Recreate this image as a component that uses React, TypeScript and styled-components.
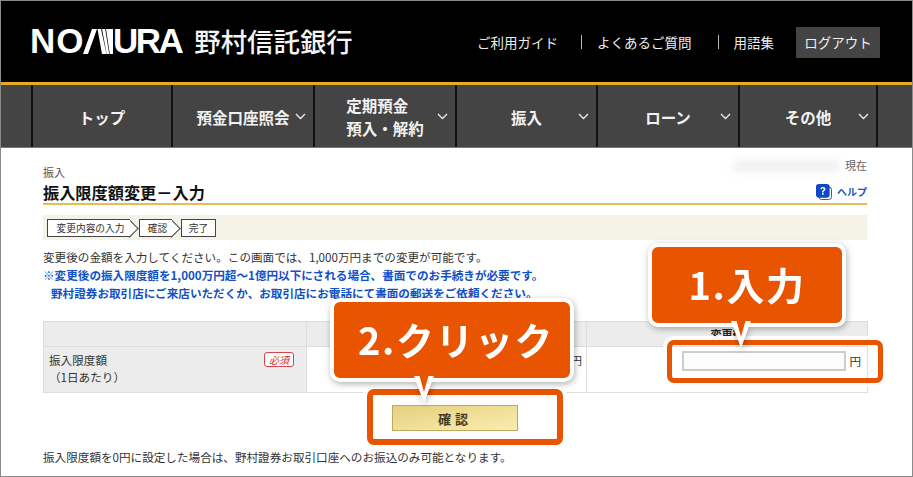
import React from 'react'
import styled, { createGlobalStyle } from 'styled-components'

const GlobalStyle = createGlobalStyle`
  html, body {
    margin: 0;
    padding: 0;
    background: #fff;
  }
  body {
    font-family: "Noto Sans CJK JP", "Liberation Sans", sans-serif;
    color: #333;
  }
`

const navItems = [
  { label: ['トップ'], arrow: false },
  { label: ['預金口座照会'], arrow: true },
  { label: ['定期預金', '預入・解約'], arrow: true },
  { label: ['振入'], arrow: true },
  { label: ['ローン'], arrow: true },
  { label: ['その他'], arrow: true },
]

const Chevron = () => (
  <ChevronSvg viewBox="0 0 11 7">
    <path d="M1 1l4.5 4.5L10 1" fill="none" stroke="#eee" strokeWidth="1.3" />
  </ChevronSvg>
)

const MonogramM = () => (
  <LogoMark viewBox="0 0 30 25">
    <path
      fill="#fff"
      d="M0 25L9 0h5L5 25zM14.500 0h3.500l5.500 25h-4.500zM19 0h3.200l4 25h-2.500zM23 0h7v25h-3.200z"
    />
  </LogoMark>
)

const HelpIcon = () => (
  <HelpSvg viewBox="0 0 17 17">
    <rect x="3" y="3" width="13.500" height="13.500" rx="3" fill="#fff" stroke="#1a4fc0" />
    <rect x="0" y="0" width="14.500" height="14.500" rx="3" fill="#1248c2" />
    <path
      d="M4.600 5.400c.2-1.500 1.200-2.300 2.700-2.300 1.600 0 2.700.9 2.700 2.300 0 1.100-.6 1.600-1.300 2.100-.6.4-.8.7-.8 1.400H6.400c0-1.200.4-1.800 1.100-2.300.5-.4.8-.6.8-1.100 0-.5-.4-.9-1-.9-.6 0-1 .3-1.100 1z"
      fill="#fff"
    />
    <rect x="6.400" y="9.700" width="1.700" height="1.700" fill="#fff" />
  </HelpSvg>
)

const App = (): JSX.Element => (
  <Frame>
    <GlobalStyle />
    <Header>
      <Logo>
        <LogoWord>
          <LogoLetters $spacing={1}>NO</LogoLetters>
          <MonogramM />
          <LogoLetters $spacing={-2.5}>URA</LogoLetters>
        </LogoWord>
        <BankName>野村信託銀行</BankName>
      </Logo>
      <HeaderLinks>
        <HeaderLink $after={8}>ご利用ガイド</HeaderLink>
        <HeaderLink $divided $after={11}>よくあるご質問</HeaderLink>
        <HeaderLink $divided $after={8}>用語集</HeaderLink>
        <LogoutButton>ログアウト</LogoutButton>
      </HeaderLinks>
    </Header>
    <Nav>
      {navItems.map(item => (
        <NavItem key={item.label[0]}>
          <NavLabel>
            {item.label.map(line => (
              <div key={line}>{line}</div>
            ))}
          </NavLabel>
          {item.arrow ? <Chevron /> : null}
        </NavItem>
      ))}
    </Nav>
    <Main>
      <TopRow>
        <Crumb>振入</Crumb>
        <DateArea>
          <BlurredDate />
          現在
        </DateArea>
      </TopRow>
      <TitleRow>
        <Title>振入限度額変更－入力</Title>
        <HelpLink>
          <HelpIcon />
          ヘルプ
        </HelpLink>
      </TitleRow>
      <StepBand>
        <Step $arrow $width={83}>変更内容の入力</Step>
        <Step $arrow $width={33}>確認</Step>
        <Step $width={35}>完了</Step>
      </StepBand>
      <Lead>変更後の金額を入力してください。この画面では、1,000万円までの変更が可能です。</Lead>
      <Notice>※変更後の振入限度額を1,000万円超～1億円以下にされる場合、書面でのお手続きが必要です。</Notice>
      <Notice $indent>野村證券お取引店にご来店いただくか、お取引店にお電話にて書面の郵送をご依頼ください。</Notice>
      <LimitTable>
        <colgroup>
          <col width="263" />
          <col width="280" />
          <col width="281" />
        </colgroup>
        <thead>
          <tr>
            <HeadCell />
            <HeadCell />
            <HeadCell>変更後</HeadCell>
          </tr>
        </thead>
        <tbody>
          <tr>
            <LabelCell>
              <LabelRow>
                振入限度額
                <Required>必須</Required>
              </LabelRow>
              <LabelNote>（1日あたり）</LabelNote>
            </LabelCell>
            <ValueCell>円</ValueCell>
            <InputCell>
              <AmountField>
                <AmountInput />円
              </AmountField>
            </InputCell>
          </tr>
        </tbody>
      </LimitTable>
      <ButtonRow>
        <ConfirmButton>確認</ConfirmButton>
      </ButtonRow>
      <Footnote>振入限度額を0円に設定した場合は、野村證券お取引口座へのお振込のみ可能となります。</Footnote>
    </Main>

    <Highlight $left={667} $top={340} $width={216} $height={43} $border={5} />
    <Highlight $left={367} $top={389} $width={196} $height={56} $border={6} />
    <Callout $left={648} $top={243} $width={198} $tail={89} $shift={0}>
      1.入力
    </Callout>
    <Callout $left={330} $top={298} $width={244} $tail={90} $shift={8}>
      2.クリック
    </Callout>
  </Frame>
)

const Frame = styled.div`
  position: relative;
  box-sizing: border-box;
  width: 913px;
  height: 477px;
  overflow: hidden;
  border: 1px solid #8a8a8a;
  background: #fff;
`

const Header = styled.header`
  box-sizing: border-box;
  height: 81px;
  padding: 25px 32px 0 29px;
  display: flex;
  justify-content: space-between;
  align-items: flex-start;
  background: #000;
`

const Logo = styled.div`
  display: flex;
  align-items: center;
  gap: 13px;
  height: 30px;
  color: #fff;
`

const LogoWord = styled.div`
  display: flex;
  align-items: center;
  font-family: "Liberation Sans", sans-serif;
  font-weight: 700;
  font-size: 35px;
  line-height: 30px;
`

const LogoLetters = styled.span<{ $spacing: number }>`
  letter-spacing: ${({ $spacing }) => $spacing}px;
`

const LogoMark = styled.svg`
  width: 30px;
  height: 25px;
  margin-left: -2px;
  margin-right: 0.5px;
`

const BankName = styled.div`
  font-size: 26.4px;
  font-weight: 500;
  line-height: 30px;
  color: #f4f4f4;
`

const HeaderLinks = styled.nav`
  display: flex;
  align-items: center;
  height: 32px;
  font-size: 13.5px;
  color: #eee;
`

const HeaderLink = styled.div<{ $divided?: boolean; $after: number }>`
  margin-left: ${({ $divided }) => ($divided ? '15px' : '0')};
  padding-left: ${({ $divided }) => ($divided ? '15px' : '0')};
  padding-right: ${({ $after }) => $after}px;
  line-height: 14px;
  border-left: ${({ $divided }) => ($divided ? '1px solid #bbb' : 'none')};
`

const LogoutButton = styled.div`
  margin-left: 14px;
  width: 84px;
  height: 31px;
  line-height: 31px;
  text-align: center;
  background: #444;
  font-size: 13.5px;
`

const Nav = styled.nav`
  box-sizing: border-box;
  height: 66px;
  padding-left: 30px;
  display: grid;
  grid-template-columns: 140px 142px 142px 141px 142px 138px;
  background: #444;
  border-top: 3px solid #e5ab22;
  border-bottom: 1px solid #777;
`

const NavItem = styled.div`
  display: grid;
  grid-template-columns: 22px 1fr 22px;
  align-items: center;
  justify-items: center;
  border-left: 2px solid #111;
  color: #f2f2f2;
  &:last-child {
    box-sizing: border-box;
    border-right: 2px solid #111;
    width: 140px;
  }
`

const NavLabel = styled.div`
  grid-column: 2;
  margin-top: 2px;
  font-size: 15.5px;
  font-weight: 700;
  line-height: 23px;
  text-align: left;
  white-space: nowrap;
`

const ChevronSvg = styled.svg`
  grid-column: 3;
  width: 11px;
  height: 7px;
  margin-right: 4px;
`

const Main = styled.main`
  padding: 10px 45px 0 42px;
`

const TopRow = styled.div`
  display: flex;
  justify-content: space-between;
  height: 23px;
  font-size: 11px;
  line-height: 15px;
  color: #555;
`

const Crumb = styled.div`
  padding-top: 7px;
`

const DateArea = styled.div`
  display: flex;
  gap: 6px;
  color: #666;
`

const BlurredDate = styled.div`
  width: 106px;
  height: 10px;
  margin-top: 3px;
  background: #eee;
  filter: blur(4px);
`

const TitleRow = styled.div`
  display: flex;
  justify-content: space-between;
  align-items: flex-end;
  box-sizing: border-box;
  height: 24px;
  border-bottom: 2px solid #e8bb55;
`

const Title = styled.h1`
  margin: 0;
  font-size: 16.2px;
  font-weight: 700;
  line-height: 22px;
  color: #111;
`

const HelpLink = styled.div`
  display: flex;
  align-items: center;
  gap: 5px;
  margin-bottom: 3px;
  font-size: 10px;
  font-weight: 700;
  line-height: 16px;
  color: #1a55b8;
`

const HelpSvg = styled.svg`
  width: 16px;
  height: 16px;
`

const StepBand = styled.div`
  position: relative;
  z-index: 0;
  display: flex;
  align-items: center;
  gap: 9px;
  box-sizing: border-box;
  height: 25px;
  margin-top: 10px;
  padding-left: 4px;
  background: #f5f2e8;
`

const Step = styled.div<{ $arrow?: boolean; $width: number }>`
  position: relative;
  box-sizing: border-box;
  width: ${({ $width }) => $width}px;
  height: 18px;
  padding-left: ${({ $arrow }) => ($arrow ? '3px' : '0')};
  font-size: 9.7px;
  line-height: 16px;
  text-align: center;
  white-space: nowrap;
  color: #333;
  background: #fff;
  border: 1px solid #444;
  border-right: ${({ $arrow }) => ($arrow ? 'none' : '1px solid #444')};
  &::after {
    content: '';
    display: ${({ $arrow }) => ($arrow ? 'block' : 'none')};
    position: absolute;
    z-index: -1;
    top: 2px;
    right: -6px;
    width: 12px;
    height: 12px;
    background: #fff;
    border-top: 1px solid #444;
    border-right: 1px solid #444;
    transform: rotate(45deg);
  }
`

const Lead = styled.p`
  margin: 8px 0 0;
  font-size: 11.6px;
  line-height: 18px;
  white-space: nowrap;
  color: #333;
`

const Notice = styled.p<{ $indent?: boolean }>`
  margin: 0;
  padding-left: ${({ $indent }) => ($indent ? '8px' : '0')};
  font-size: 11.6px;
  font-weight: 700;
  line-height: 18px;
  white-space: nowrap;
  color: #1250c8;
`

const LimitTable = styled.table`
  width: 824px;
  margin-top: 19px;
  table-layout: fixed;
  border-collapse: collapse;
  font-size: 11.6px;
`

const HeadCell = styled.th`
  height: 24px;
  padding: 0;
  background: #ececec;
  border: 1px solid #ddd;
  font-size: 11px;
  font-weight: 700;
  color: #222;
`

const LabelCell = styled.td`
  height: 40px;
  padding: 5px 12px 0 5px;
  vertical-align: top;
  background: #ececec;
  border: 1px solid #ddd;
  line-height: 17px;
`

const LabelRow = styled.div`
  display: flex;
  justify-content: space-between;
  align-items: center;
`

const LabelNote = styled.div``

const Required = styled.span`
  box-sizing: border-box;
  width: 30px;
  height: 15px;
  margin-top: -2px;
  font-size: 10px;
  font-style: italic;
  line-height: 13px;
  text-align: center;
  color: #d3222c;
  background: #fff;
  border: 1px solid #d9454c;
  border-radius: 3px;
`

const ValueCell = styled.td`
  padding: 5px 4px 0 0;
  vertical-align: top;
  text-align: right;
  line-height: 17px;
  border: 1px solid #ddd;
`

const InputCell = styled.td`
  padding: 4px 5px 0 0;
  vertical-align: top;
  border: 1px solid #ddd;
`

const AmountField = styled.div`
  display: flex;
  justify-content: flex-end;
  align-items: center;
  gap: 3px;
  padding-right: 1px;
`

const AmountInput = styled.input`
  box-sizing: border-box;
  width: 164px;
  height: 20px;
  padding: 0;
  background: #fcfcfc;
  border: 2px solid #ccc;
  outline: none;
`

const ButtonRow = styled.div`
  display: flex;
  justify-content: flex-start;
  margin-top: 12px;
  padding-left: 349px;
`

const ConfirmButton = styled.button`
  box-sizing: border-box;
  width: 126px;
  height: 26px;
  padding: 0;
  font-family: inherit;
  font-size: 13px;
  font-weight: 700;
  letter-spacing: 4px;
  color: #443c20;
  background: linear-gradient(to bottom right, #e6cf7f, #f9eeb0);
  border: 1px solid #bdaa5c;
`

const Footnote = styled.p`
  margin: 17px 0 0;
  font-size: 11.6px;
  line-height: 18px;
  white-space: nowrap;
`

const Highlight = styled.div<{
  $left: number
  $top: number
  $width: number
  $height: number
  $border: number
}>`
  position: absolute;
  box-sizing: border-box;
  left: ${({ $left }) => $left - 1}px;
  top: ${({ $top }) => $top - 1}px;
  width: ${({ $width }) => $width}px;
  height: ${({ $height }) => $height}px;
  border: ${({ $border }) => $border}px solid #e85400;
  border-radius: 7px;
  box-shadow: 0 0 0 4px rgba(255, 255, 255, 0.95);
`

const Callout = styled.div<{
  $left: number
  $top: number
  $width: number
  $tail: number
  $shift: number
}>`
  position: absolute;
  box-sizing: border-box;
  left: ${({ $left }) => $left - 1}px;
  top: ${({ $top }) => $top - 1}px;
  width: ${({ $width }) => $width}px;
  height: 84px;
  padding-left: ${({ $shift }) => $shift}px;
  font-size: 38px;
  font-weight: 700;
  line-height: 73px;
  letter-spacing: 1.5px;
  text-align: center;
  color: #fff;
  background: #e85400;
  border: 4px solid #fff;
  border-radius: 10px;
  filter: drop-shadow(1px 2px 3px rgba(0, 0, 0, 0.3));
  &::before {
    content: '';
    position: absolute;
    left: ${({ $tail }) => $tail - 10}px;
    top: 74px;
    width: 20px;
    height: 27px;
    background: #fff;
    clip-path: polygon(0 0, 100% 0, 50% 100%);
  }
  &::after {
    content: '';
    position: absolute;
    left: ${({ $tail }) => $tail - 5}px;
    top: 72px;
    width: 10px;
    height: 18px;
    background: #e85400;
    clip-path: polygon(0 0, 100% 0, 50% 100%);
  }
`

export default App
